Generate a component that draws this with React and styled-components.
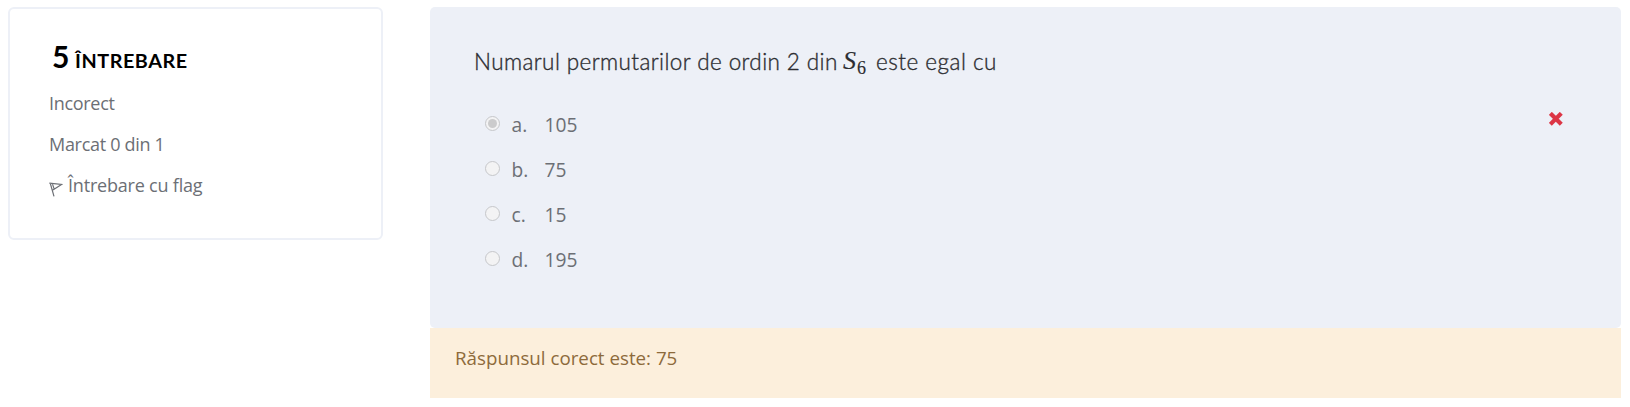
import React from "react";
import styled, { createGlobalStyle } from "styled-components";

const GlobalStyle = createGlobalStyle`
  * { box-sizing: border-box; }
  body { margin: 0; background: #fff; font-family: "Open Sans", sans-serif; color: #6c6f75; }
`;

const Page = styled.main`
  display: grid;
  grid-template-columns: 375px 1191px;
  column-gap: 47px;
  align-items: start;
  padding: 7px 9px 9px 8px;
  height: 407px;
`;

const InfoCard = styled.aside`
  height: 233px;
  padding: 30px 39px;
  border: 2px solid #edf0f7;
  border-radius: 6px;
`;

const InfoTitle = styled.h3`
  display: flex;
  align-items: baseline;
  height: 44px;
  margin: 0;
  padding-left: 3px;
  color: #000;
  font-family: Lato, sans-serif;
  font-weight: 700;
  font-size: 19.8px;
  line-height: 35px;
  letter-spacing: 0.55px;
`;

const QuestionNumber = styled.span`
  width: 23px;
  font-size: 30px;
`;

const InfoLine = styled.div`
  display: flex;
  height: 41px;
  font-size: 18px;
  line-height: 41px;
  letter-spacing: ${(p) => p.$spacing || 0}px;
  white-space: nowrap;
`;

const FlagIcon = styled.svg`
  width: 14px;
  height: 15px;
  margin: 17px 5px 0 0;
`;

const QuestionPanel = styled.section`
  height: 321px;
  padding: 35px 45px 0 44px;
  background: #edf0f7;
  border-radius: 5px;
`;

const QuestionText = styled.div`
  display: flex;
  height: 60px;
  color: #2c2d31;
  font-family: Lato, sans-serif;
  font-weight: 300;
  font-size: 22.5px;
  line-height: 39px;
  white-space: nowrap;
`;

const Phrase = styled.span`
  width: ${(p) => p.$width}px;
  letter-spacing: ${(p) => p.$spacing}px;
  -webkit-text-stroke: 0.35px currentColor;
`;

const MathSymbol = styled.span`
  width: 33px;
  font-family: "Liberation Serif", serif;
  font-weight: 400;
  font-size: 26px;
  font-style: italic;
  line-height: 37px;
  -webkit-text-stroke: 0.15px currentColor;
`;

const Subscript = styled.sub`
  margin-left: 1px;
  font-size: 18px;
  font-style: normal;
  line-height: 0;
  vertical-align: -5px;
`;

const OptionList = styled.div`
  display: flex;
  flex-direction: column;
`;

const Option = styled.div`
  display: grid;
  grid-template-columns: 27px 33px 1fr 25px;
  height: 45px;
  padding-left: 10.5px;
  padding-right: 2px;
  font-size: 19.2px;
  line-height: 45px;
`;

const Radio = styled.span`
  display: grid;
  place-items: center;
  width: 15px;
  height: 15px;
  margin-top: 14px;
  border: 1px solid #c6c7ca;
  border-radius: 50%;
  background: #f3f3f4;
  &::after {
    content: "";
    width: 9px;
    height: 9px;
    border-radius: 50%;
    background: ${(p) => (p.$checked ? "#cbcbcc" : "transparent")};
  }
`;

const CrossIcon = styled.svg`
  width: 14px;
  height: 14px;
  margin-top: 10px;
`;

const Feedback = styled.section`
  height: 70px;
  padding: 0 25px;
  background: #fcefdc;
  color: #8d6a3b;
  font-size: 18.75px;
  line-height: 60px;
`;

const options = [
  { letter: "a.", value: "105", checked: true },
  { letter: "b.", value: "75" },
  { letter: "c.", value: "15" },
  { letter: "d.", value: "195" },
];

export default function App() {
  return (
    <>
      <GlobalStyle />
      <Page>
        <InfoCard>
          <InfoTitle>
            <QuestionNumber>5</QuestionNumber>ÎNTREBARE
          </InfoTitle>
          <InfoLine $spacing={-0.3}>Incorect</InfoLine>
          <InfoLine $spacing={-0.3}>Marcat 0 din 1</InfoLine>
          <InfoLine $spacing={-0.2}>
            <FlagIcon viewBox="0 0 14 15" fill="none" stroke="#6c6f75" strokeWidth="1.2">
              <path d="M1.2 1 5 14.3M.3 1.2l12.2 1.3L3.9 8M3.5 2.1l1.6 4.8" />
            </FlagIcon>
            Întrebare cu flag
          </InfoLine>
        </InfoCard>
        <div>
          <QuestionPanel>
            <QuestionText>
              <Phrase $width={369} $spacing={0.4}>Numarul permutarilor de ordin 2 din</Phrase>
              <MathSymbol>S<Subscript>6</Subscript></MathSymbol>
              <Phrase $width={125} $spacing={0.5}>este egal cu</Phrase>
            </QuestionText>
            <OptionList>
              {options.map(({ letter, value, checked }) => (
                <Option key={letter}>
                  <Radio $checked={checked} />
                  <span>{letter}</span>
                  <span>{value}</span>
                  {checked && (
                    <CrossIcon viewBox="0 0 14 14" fill="none" stroke="#dc3545" strokeWidth="4.2">
                      <path d="m2.8 2.8 8 8M10.8 2.8l-8 8" strokeLinecap="square" />
                    </CrossIcon>
                  )}
                </Option>
              ))}
            </OptionList>
          </QuestionPanel>
          <Feedback>Răspunsul corect este: 75</Feedback>
        </div>
      </Page>
    </>
  );
}
